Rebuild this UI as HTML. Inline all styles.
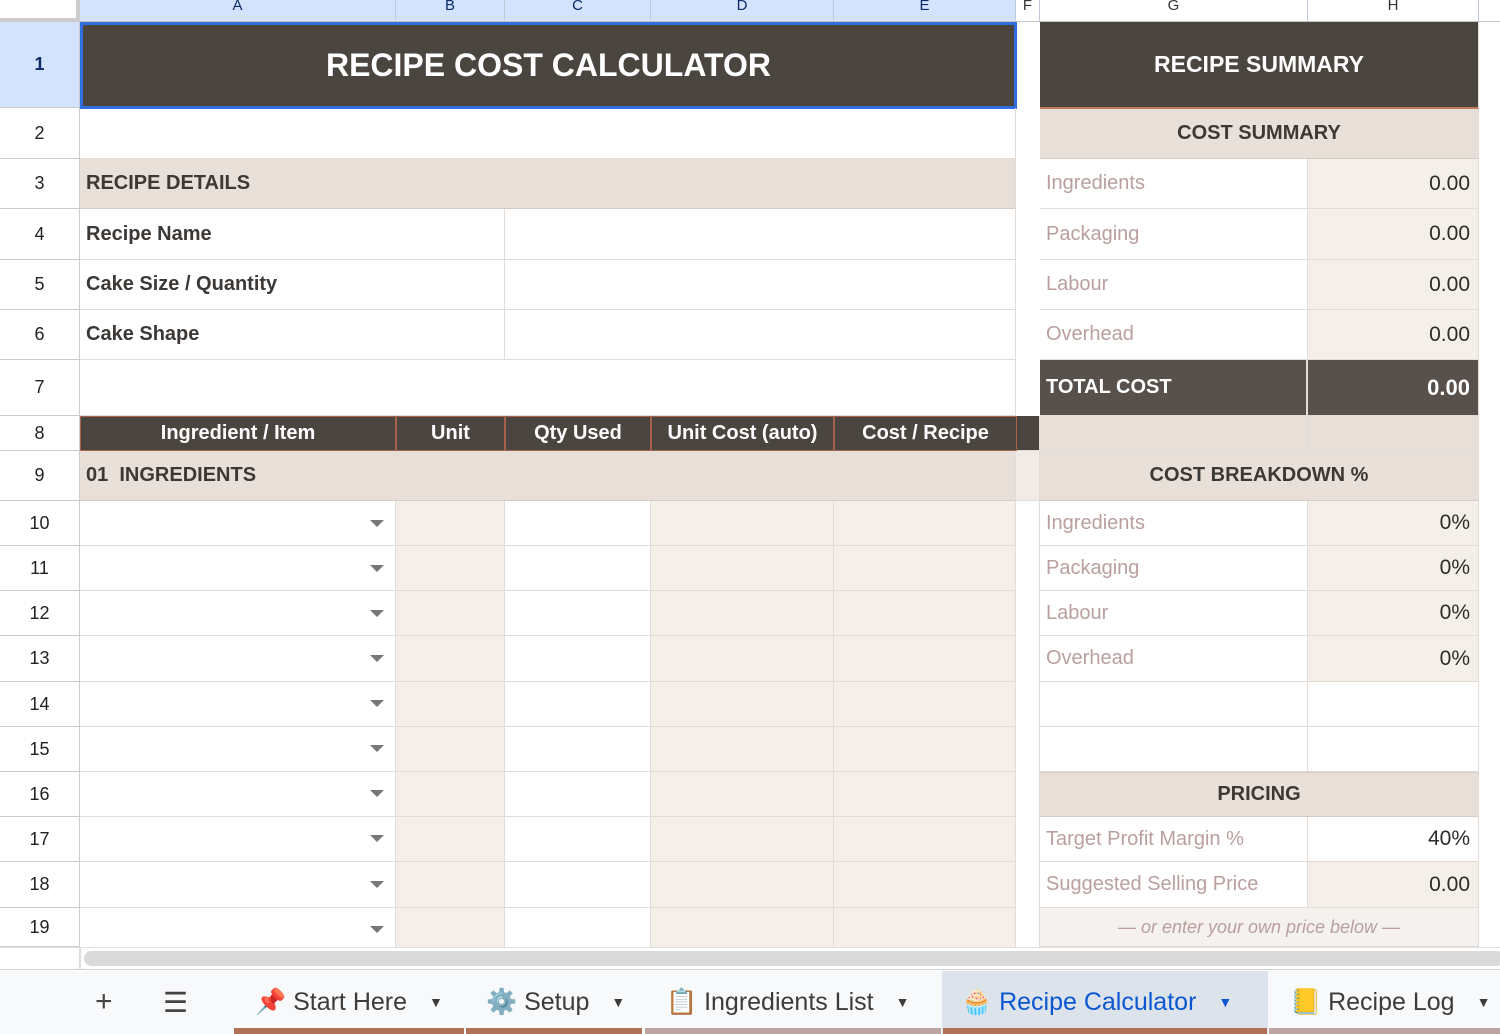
<!DOCTYPE html>
<html><head><meta charset="utf-8">
<style>
*{margin:0;padding:0;box-sizing:border-box}
body{width:1500px;height:1034px;overflow:hidden;background:#fff;font-family:"Liberation Sans",Arial,sans-serif;position:relative}
.c{position:absolute;border-right:1px solid #e3dcd6;border-bottom:1px solid #e3dcd6;display:flex;align-items:center;font-size:20px;color:#3c3835;white-space:nowrap;overflow:hidden}
.h{background:#fff;border-right:1px solid #ccc;border-bottom:1px solid #ccc;justify-content:center;font-size:18px;color:#222}
.ch{position:absolute;top:0;height:22px;background:#d3e3fd;border-right:1px solid #c0c8d8;border-bottom:1px solid #c4c4c4;font-size:15px;color:#0b2a66;text-align:center;line-height:12px;overflow:hidden}
.dark{background:#4a453f;color:#fff;font-weight:bold;justify-content:center}
.beige{background:#e8e0d8;font-weight:bold;border-bottom:1px solid #d6ccc4}
.lt{background:#f4efe9}
.lbl{color:#b99f9e;padding-left:6px}
.val{justify-content:flex-end;padding-right:8px;font-size:21px;color:#2f2b28;background:#f4efe9}
.bold{font-weight:bold;padding-left:6px}
.dd{justify-content:flex-end;padding-right:12px}
.dd:after{content:"";border-left:7px solid transparent;border-right:7px solid transparent;border-top:7px solid #777}
.tab{position:absolute;top:970px;height:64px;display:flex;align-items:center;font-size:25px;color:#3c3c3c;gap:8px}
.tab .ar{font-size:14px;margin-left:14px}
.ul{position:absolute;top:1028px;height:6px}
</style></head><body>
<!-- column headers -->
<div class="ch" style="left:0;width:80px;background:#fff;border-right:4px solid #ccc;border-bottom:4px solid #ccc"></div>
<div class="ch" style="left:80px;width:316px">A</div>
<div class="ch" style="left:396px;width:109px">B</div>
<div class="ch" style="left:505px;width:146px">C</div>
<div class="ch" style="left:651px;width:183px">D</div>
<div class="ch" style="left:834px;width:182px">E</div>
<div class="ch" style="left:1016px;width:24px;background:#fff;color:#333">F</div>
<div class="ch" style="left:1040px;width:268px;background:#fff;color:#333">G</div>
<div class="ch" style="left:1308px;width:171px;background:#fff;color:#333">H</div>
<div class="ch" style="left:1479px;width:21px;background:#fff;border-right:none"></div>

<!-- row headers -->
<div class="c h" style="left:0;top:22px;width:80px;height:86px;background:#d3e3fd;color:#0b2a66;font-weight:bold">1</div>
<div class="c h" style="left:0;top:108px;width:80px;height:51px">2</div>
<div class="c h" style="left:0;top:159px;width:80px;height:50px">3</div>
<div class="c h" style="left:0;top:209px;width:80px;height:51px">4</div>
<div class="c h" style="left:0;top:260px;width:80px;height:50px">5</div>
<div class="c h" style="left:0;top:310px;width:80px;height:50px">6</div>
<div class="c h" style="left:0;top:360px;width:80px;height:56px">7</div>
<div class="c h" style="left:0;top:416px;width:80px;height:35px">8</div>
<div class="c h" style="left:0;top:451px;width:80px;height:50px">9</div>
<div class="c h" style="left:0;top:501px;width:80px;height:45px">10</div>
<div class="c h" style="left:0;top:546px;width:80px;height:45px">11</div>
<div class="c h" style="left:0;top:591px;width:80px;height:45px">12</div>
<div class="c h" style="left:0;top:636px;width:80px;height:46px">13</div>
<div class="c h" style="left:0;top:682px;width:80px;height:45px">14</div>
<div class="c h" style="left:0;top:727px;width:80px;height:45px">15</div>
<div class="c h" style="left:0;top:772px;width:80px;height:45px">16</div>
<div class="c h" style="left:0;top:817px;width:80px;height:45px">17</div>
<div class="c h" style="left:0;top:862px;width:80px;height:46px">18</div>
<div class="c h" style="left:0;top:908px;width:80px;height:39px">19</div>

<!-- row 1 -->
<div class="c dark" style="left:80px;top:22px;width:937px;height:87px;font-size:32px;border:3px solid #2f6fe0">RECIPE COST CALCULATOR</div>
<div class="c dark" style="left:1040px;top:22px;width:439px;height:87px;font-size:23px;border-bottom:2px solid #c0775a">RECIPE SUMMARY</div>
<!-- row 2 -->
<div class="c" style="left:80px;top:108px;width:936px;height:51px"></div>
<div class="c beige" style="left:1040px;top:109px;width:439px;height:50px;justify-content:center">COST SUMMARY</div>
<!-- rows 3-6 -->
<div class="c beige bold" style="left:80px;top:159px;width:936px;height:50px">RECIPE DETAILS</div>
<div class="c bold" style="left:80px;top:209px;width:425px;height:51px">Recipe Name</div>
<div class="c" style="left:505px;top:209px;width:511px;height:51px"></div>
<div class="c bold" style="left:80px;top:260px;width:425px;height:50px">Cake Size / Quantity</div>
<div class="c" style="left:505px;top:260px;width:511px;height:50px"></div>
<div class="c bold" style="left:80px;top:310px;width:425px;height:50px">Cake Shape</div>
<div class="c" style="left:505px;top:310px;width:511px;height:50px"></div>
<div class="c" style="left:80px;top:360px;width:936px;height:56px"></div>

<div class="c lbl" style="left:1040px;top:159px;width:268px;height:50px">Ingredients</div>
<div class="c val" style="left:1308px;top:159px;width:171px;height:50px">0.00</div>
<div class="c lbl" style="left:1040px;top:209px;width:268px;height:51px">Packaging</div>
<div class="c val" style="left:1308px;top:209px;width:171px;height:51px">0.00</div>
<div class="c lbl" style="left:1040px;top:260px;width:268px;height:50px">Labour</div>
<div class="c val" style="left:1308px;top:260px;width:171px;height:50px">0.00</div>
<div class="c lbl" style="left:1040px;top:310px;width:268px;height:50px">Overhead</div>
<div class="c val" style="left:1308px;top:310px;width:171px;height:50px">0.00</div>
<div class="c" style="left:1040px;top:360px;width:268px;height:56px;background:#58514b;color:#fff;font-weight:bold;padding-left:6px;border-right:2px solid #ddd">TOTAL COST</div>
<div class="c" style="left:1308px;top:360px;width:171px;height:56px;background:#58514b;color:#fff;font-weight:bold;justify-content:flex-end;padding-right:8px;font-size:22px">0.00</div>

<!-- row 8 -->
<div class="c dark" style="left:80px;top:416px;width:316px;height:35px;border:1px solid #a8614a;font-size:20px">Ingredient / Item</div>
<div class="c dark" style="left:396px;top:416px;width:109px;height:35px;border:1px solid #a8614a;font-size:20px">Unit</div>
<div class="c dark" style="left:505px;top:416px;width:146px;height:35px;border:1px solid #a8614a;font-size:20px">Qty Used</div>
<div class="c dark" style="left:651px;top:416px;width:183px;height:35px;border:1px solid #a8614a;font-size:20px">Unit Cost (auto)</div>
<div class="c dark" style="left:834px;top:416px;width:183px;height:35px;border:1px solid #a8614a;font-size:20px">Cost / Recipe</div>
<div class="c" style="left:1017px;top:416px;width:23px;height:35px;background:#4a453f"></div>
<div class="c" style="left:1040px;top:416px;width:268px;height:35px;background:#e8e0d8"></div>
<div class="c" style="left:1308px;top:416px;width:171px;height:35px;background:#e8e0d8"></div>
<!-- row 9 -->
<div class="c beige bold" style="left:80px;top:451px;width:936px;height:50px">01&nbsp; INGREDIENTS</div>
<div class="c" style="left:1016px;top:451px;width:24px;height:50px;background:#f0ebe6"></div>
<div class="c beige" style="left:1040px;top:451px;width:439px;height:50px;justify-content:center">COST BREAKDOWN %</div>

<!-- rows 10-19 left grid -->
<div style="position:absolute;left:80px;top:501px;width:936px;height:446px;
background:
linear-gradient(90deg,#fff 0,#fff 316px,#f4efe9 316px,#f4efe9 425px,#fff 425px,#fff 571px,#f4efe9 571px,#f4efe9 936px);"></div>
<svg style="position:absolute;left:80px;top:501px" width="936" height="446">
<g stroke="#e3dcd6" stroke-width="1">
<line x1="0" y1="44.5" x2="936" y2="44.5"/><line x1="0" y1="89.5" x2="936" y2="89.5"/><line x1="0" y1="134.5" x2="936" y2="134.5"/><line x1="0" y1="180.5" x2="936" y2="180.5"/><line x1="0" y1="225.5" x2="936" y2="225.5"/><line x1="0" y1="270.5" x2="936" y2="270.5"/><line x1="0" y1="315.5" x2="936" y2="315.5"/><line x1="0" y1="360.5" x2="936" y2="360.5"/><line x1="0" y1="406.5" x2="936" y2="406.5"/>
<line x1="315.5" y1="0" x2="315.5" y2="446"/><line x1="424.5" y1="0" x2="424.5" y2="446"/><line x1="570.5" y1="0" x2="570.5" y2="446"/><line x1="753.5" y1="0" x2="753.5" y2="446"/><line x1="935.5" y1="0" x2="935.5" y2="446"/>
</g>
<g fill="#777">
<path d="M290 19h14l-7 7z"/><path d="M290 64h14l-7 7z"/><path d="M290 109h14l-7 7z"/><path d="M290 154h14l-7 7z"/><path d="M290 199h14l-7 7z"/><path d="M290 244h14l-7 7z"/><path d="M290 289h14l-7 7z"/><path d="M290 334h14l-7 7z"/><path d="M290 380h14l-7 7z"/><path d="M290 425h14l-7 7z"/>
</g></svg>

<!-- right breakdown -->
<div class="c lbl" style="left:1040px;top:501px;width:268px;height:45px">Ingredients</div>
<div class="c val" style="left:1308px;top:501px;width:171px;height:45px">0%</div>
<div class="c lbl" style="left:1040px;top:546px;width:268px;height:45px">Packaging</div>
<div class="c val" style="left:1308px;top:546px;width:171px;height:45px">0%</div>
<div class="c lbl" style="left:1040px;top:591px;width:268px;height:45px">Labour</div>
<div class="c val" style="left:1308px;top:591px;width:171px;height:45px">0%</div>
<div class="c lbl" style="left:1040px;top:636px;width:268px;height:46px">Overhead</div>
<div class="c val" style="left:1308px;top:636px;width:171px;height:46px">0%</div>
<div class="c" style="left:1040px;top:682px;width:268px;height:45px"></div>
<div class="c" style="left:1308px;top:682px;width:171px;height:45px"></div>
<div class="c" style="left:1040px;top:727px;width:268px;height:45px"></div>
<div class="c" style="left:1308px;top:727px;width:171px;height:45px"></div>
<div class="c beige" style="left:1040px;top:772px;width:439px;height:45px;justify-content:center;border-top:1px solid #d6ccc4">PRICING</div>
<div class="c lbl" style="left:1040px;top:817px;width:268px;height:45px">Target Profit Margin %</div>
<div class="c val" style="left:1308px;top:817px;width:171px;height:45px;background:#fff">40%</div>
<div class="c lbl" style="left:1040px;top:862px;width:268px;height:46px">Suggested Selling Price</div>
<div class="c val" style="left:1308px;top:862px;width:171px;height:46px">0.00</div>
<div class="c" style="left:1040px;top:908px;width:439px;height:39px;background:#f4f1ee;justify-content:center;font-style:italic;color:#b99f9e;font-size:18px">— or enter your own price below —</div>
<div style="position:absolute;left:1016px;top:501px;width:24px;height:446px;border-right:1px solid #e3dcd6"></div>

<!-- scrollbar -->
<div style="position:absolute;left:0;top:947px;width:1500px;height:23px;background:#fff;border-top:1px solid #e0e0e0;border-bottom:1px solid #d0d0d0"></div>
<div style="position:absolute;left:79px;top:947px;width:2px;height:23px;background:#ddd"></div>
<div style="position:absolute;left:84px;top:951px;width:1420px;height:15px;background:#dadada;border-radius:8px"></div>

<!-- tab bar -->
<div style="position:absolute;left:0;top:971px;width:1500px;height:63px;background:#f8f9fb"></div>
<div style="position:absolute;left:942px;top:971px;width:326px;height:63px;background:#dde3ea"></div>
<div class="tab" style="left:95px;font-size:30px;color:#444">+</div>
<div class="tab" style="left:163px;font-size:28px;color:#444">☰</div>
<div class="tab" style="left:255px">📌 Start Here <span class="ar">▼</span></div>
<div class="tab" style="left:486px">⚙️ Setup <span class="ar">▼</span></div>
<div class="tab" style="left:666px">📋 Ingredients List <span class="ar">▼</span></div>
<div class="tab" style="left:961px;color:#0b57d0">🧁 Recipe Calculator <span class="ar">▼</span></div>
<div class="tab" style="left:1290px">📒 Recipe Log <span class="ar">▼</span></div>
<div class="ul" style="left:234px;width:230px;background:#b07158"></div>
<div class="ul" style="left:466px;width:176px;background:#b07158"></div>
<div class="ul" style="left:645px;width:296px;background:#bba4a2"></div>
<div class="ul" style="left:943px;width:324px;background:#b07158"></div>
<div class="ul" style="left:1269px;width:231px;background:#bba4a2"></div>
</body></html>
